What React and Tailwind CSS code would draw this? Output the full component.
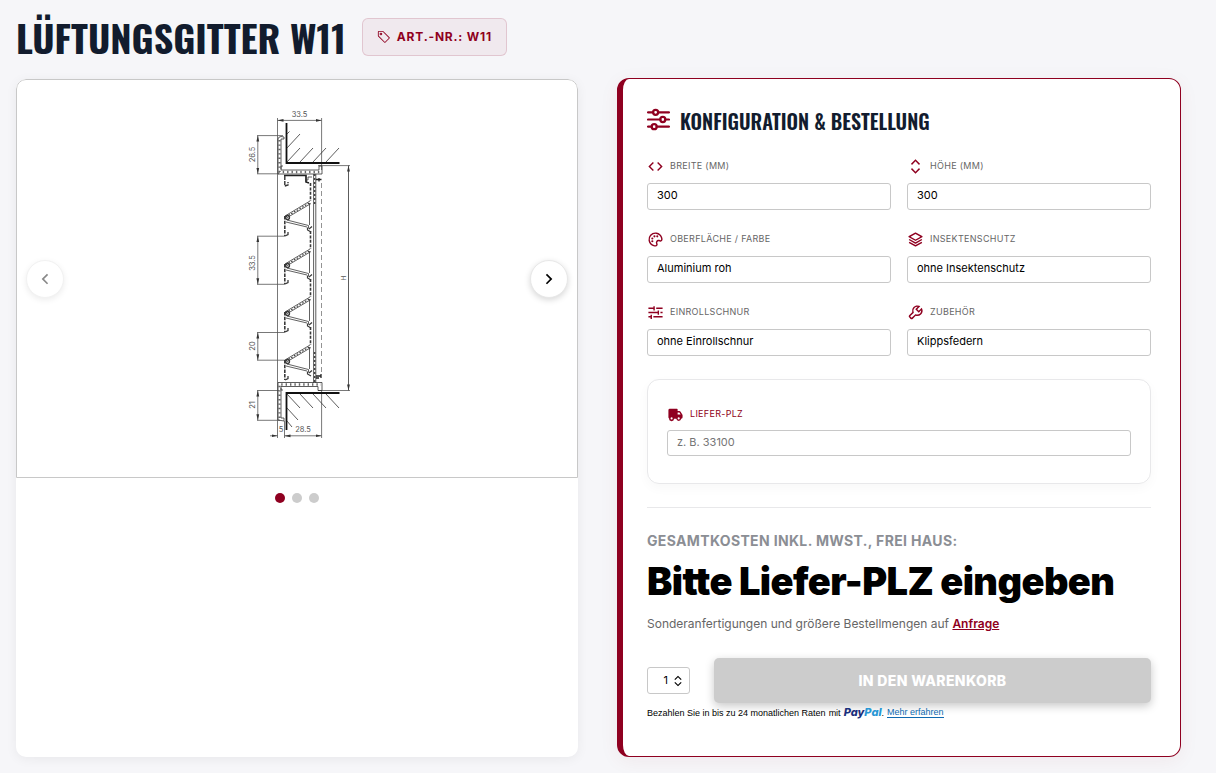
import {
  BiExpandHorizontal,
  BiExpandVertical,
  BiLayer,
  BiPalette,
  BiSlider,
  BiSolidTruck,
  BiWrench,
} from "react-icons/bi";
import { BsTag } from "react-icons/bs";
import { RiArrowLeftSLine, RiArrowRightSLine, RiExpandUpDownLine } from "react-icons/ri";

function SlidersIcon({ className }) {
  return (
    <svg viewBox="0 0 512 512" className={className} fill="none" stroke="currentColor" strokeWidth="50" strokeLinecap="round" aria-hidden="true">
      <path d="M24 96H136M248 96H488M24 256H296M408 256H488M24 416H104M216 416H488" />
      <circle cx="192" cy="96" r="56" />
      <circle cx="352" cy="256" r="56" />
      <circle cx="160" cy="416" r="56" />
    </svg>
  );
}

function ArrowedLine({ x1, y1, x2, y2 }) {
  return <line x1={x1} y1={y1} x2={x2} y2={y2} markerStart="url(#tip)" markerEnd="url(#tip)" />;
}

function Louvre({ y }) {
  return (
    <g>
      <path d={`M285 ${y}L310 ${y - 15}M286.5 ${y + 2}L311 ${y - 12.5}`} />
      <path d={`M285.7 ${y + 1}L310.5 ${y - 13.7}`} strokeDasharray="1.6 1.6" strokeWidth="1.2" />
      <path d={`M287 ${y + 4}L308.5 ${y + 9.5}V${y + 12.5}M286 ${y + 6}L307 ${y + 11}M309.5 ${y - 13}V${y + 9}`} />
      <path d={`M284.8 ${y}V${y + 20}`} strokeDasharray="3.5 1.2" strokeWidth="1.6" />
      <path d={`M285 ${y + 20}L288 ${y + 18.5}V${y + 16}`} strokeWidth="1.3" />
      <circle cx="287.5" cy={y + 1.5} r="2" strokeWidth="1.3" />
      <path d={`M307.5 ${y + 11.5}V${y + 14}L311 ${y + 16}M309 ${y + 13}L312 ${y + 10.5}`} strokeWidth="1.2" />
      <path d={`M310.5 ${y - 33}V${y - 15}`} strokeDasharray="3 1.4" strokeWidth="1.6" />
    </g>
  );
}

function ProfileDrawing() {
  return (
    <svg viewBox="241 111 112 336" className="h-[336px] w-[112px]" fill="none" stroke="#555" strokeWidth="0.8" role="img" aria-label="Profilschnitt W11">
      <defs>
        <marker id="tip" viewBox="0 0 6 4" refX="6" refY="2" markerWidth="6" markerHeight="4" orient="auto-start-reverse" markerUnits="userSpaceOnUse">
          <path d="M0 .6L6 2L0 3.4z" fill="#333" stroke="none" />
        </marker>
      </defs>
      <path d="M277.5 118V438M321.6 118V170M348.5 165.5V390.5" stroke="#555" />
      <ArrowedLine x1="277.5" y1="120.4" x2="321.6" y2="120.4" />
      <ArrowedLine x1="348.5" y1="165.6" x2="348.5" y2="390.4" />
      <ArrowedLine x1="257.8" y1="135.6" x2="257.8" y2="173.8" />
      <ArrowedLine x1="257.8" y1="236.2" x2="257.8" y2="284.3" />
      <ArrowedLine x1="257.8" y1="332.5" x2="257.8" y2="360.2" />
      <ArrowedLine x1="257.8" y1="390.5" x2="257.8" y2="420.3" />
      <ArrowedLine x1="284.5" y1="435.8" x2="321.6" y2="435.8" />
      <path d="M270 435.8H277.5" markerEnd="url(#tip)" />
      <path d="M257 135.6H283M257 173.8H279M257 236.2H285M257 284.3H285M257 332.5H285M257 360.2H285M257 390.5H279M257 420.3H280M318 165.6H350M318 390.5H350M284.5 421V438M321.6 390V438" />
      <path d="M286.5 123V163H339.5M286.5 430V393H339.5" stroke="#111" strokeWidth="1.8" />
      <path d="M287 134L289.5 131.5M287 148L300 134M287 162L300 148M300 162L313 148M313 162L326 148M326 162L339 148" stroke="#333" />
      <path d="M287 394L300 408M300 394L313 408M313 394L326 408M326 394L339 408M287 408L298 420M287 421L292 427" stroke="#333" />

      <path d="M278 174V139Q278 137 281 136.5L284 137V139H281V170H319V166H322V174ZM281 169V166H283" stroke="#333" />
      <path d="M279.5 140V172H320" stroke="#666" strokeWidth="2.4" strokeDasharray="1.4 3" />
      <path d="M278 420V382.5H322V390.5H318V386.5H281V418H284V421ZM281 388V390H283" stroke="#333" />
      <path d="M279.5 418V384.5H321" stroke="#666" strokeWidth="2.4" strokeDasharray="1.4 3" />

      <path d="M284 175.5H306V182L309 183" stroke="#222" strokeWidth="1.7" />
      <path d="M284.8 176V186L288 185V182" stroke="#333" strokeWidth="1.4" strokeDasharray="4 1" />
      <path d="M305 180H308V177H312" stroke="#333" />
      <path d="M313.6 174V383M315.8 174V383" stroke="#333" />
      <path d="M314.7 174V204M314.7 352V383" stroke="#444" strokeWidth="1.6" strokeDasharray="2 2" />
      <path d="M316 179.5H321.5M319 178V181.5M316 376H321.5M316 378H319M321 374V378" stroke="#222" strokeWidth="1.3" />
      <path d="M321.5 183V374" stroke="#777" strokeDasharray="5 3" />
      <g stroke="#3a3a3a">
        <Louvre y={216} />
        <Louvre y={264} />
        <Louvre y={312} />
        <Louvre y={360} />
      </g>
      <g fill="#555" stroke="none" fontSize="7.5" textAnchor="middle" fontFamily="Inter, sans-serif">
        <text x="299.5" y="116.5">33.5</text>
        <text x="303" y="431.5">28.5</text>
        <text x="281" y="431.5">5</text>
        <text transform="translate(254.5 154.5) rotate(-90)">26.5</text>
        <text transform="translate(254.5 263) rotate(-90)">33.5</text>
        <text transform="translate(254.5 346) rotate(-90)">20</text>
        <text transform="translate(254.5 405) rotate(-90)">21</text>
        <text transform="translate(345.5 278) rotate(-90)" fontSize="6">H</text>
      </g>
    </svg>
  );
}

const control =
  "block w-full appearance-none rounded-[3px] border border-[#c8c8c8] bg-white px-[9px] pb-[3px] text-[11px] text-black outline-none placeholder:text-[#757575]";

function Field({ id, label, icon: Icon, children }) {
  return (
    <div className="flex flex-col gap-[9px]">
      <label htmlFor={id} className="flex h-4 items-center gap-[6px] text-[9px] tracking-[0.3px] text-[#666] uppercase">
        <Icon className="size-[17px] text-[#8f0020]" />
        {label}
      </label>
      {children}
    </div>
  );
}

function SelectField({ id, label, icon, option }) {
  return (
    <Field id={id} label={label} icon={icon}>
      <select id={id} className={`${control} h-[27px]`}>
        <option>{option}</option>
      </select>
    </Field>
  );
}

export default function App() {
  return (
    <main className="min-h-screen bg-[#f6f6f9] pt-3 pr-[35px] pb-4 pl-4 font-['Inter',sans-serif]">
      <header className="flex items-center gap-4 pb-4">
        <h1 className="font-['Oswald',sans-serif] text-[38px] leading-[50px] font-bold text-[#121c2e]">LÜFTUNGSGITTER W11</h1>
        <p className="flex h-[38px] items-center gap-[6px] rounded-md border border-[#8f0020]/15 bg-[#8f0020]/5 px-[14px] text-[12px] font-bold tracking-[0.8px] text-[#8f0020]">
          <BsTag className="size-[14px]" />
          ART.-NR.: W11
        </p>
      </header>

      <div className="grid grid-cols-[562fr_564fr] gap-[39px]">
        <section aria-label="Produktbilder" className="mt-px overflow-hidden rounded-[10px] bg-white shadow-[0_2px_12px_rgba(0,0,0,0.06)]">
          <div className="flex h-[399px] items-center justify-between rounded-t-[10px] border border-[#c8c8c8] px-[9px]">
            <button type="button" aria-label="Vorheriges Bild" className="flex size-[38px] items-center justify-center rounded-full border border-[#f2f2f2] bg-white text-[#888] shadow-[0_2px_6px_rgba(0,0,0,0.08)]">
              <RiArrowLeftSLine className="size-5" />
            </button>
            <ProfileDrawing />
            <button type="button" aria-label="Nächstes Bild" className="flex size-[38px] items-center justify-center rounded-full border border-[#e8e8e8] bg-white text-black shadow-[0_2px_6px_rgba(0,0,0,0.16)]">
              <RiArrowRightSLine className="size-5" />
            </button>
          </div>
          <div className="flex justify-center gap-[7px] pt-[15px]">
            <button type="button" aria-label="Bild 1" className="size-[10px] rounded-full bg-[#8f0020]" />
            <button type="button" aria-label="Bild 2" className="size-[10px] rounded-full bg-[#ccc]" />
            <button type="button" aria-label="Bild 3" className="size-[10px] rounded-full bg-[#ccc]" />
          </div>
        </section>

        <section className="rounded-[12px] border border-l-[6px] border-[#8f0020] bg-white pt-[28px] pr-[29px] pb-[37px] pl-6 shadow-[0_4px_20px_rgba(143,0,32,0.06)]">
          <h2 className="flex items-center gap-[10px] font-['Oswald',sans-serif] text-[20px] leading-[28px] font-semibold text-[#121c2e]">
            <SlidersIcon className="mb-1 size-[23px] text-[#8f0020]" />
            KONFIGURATION &amp; BESTELLUNG
          </h2>

          <form onSubmit={(event) => event.preventDefault()}>
            <div className="mt-[23px] grid grid-cols-2 gap-x-4 gap-y-[21px]">
              <Field id="width" label="Breite (mm)" icon={BiExpandHorizontal}>
                <input id="width" type="text" inputMode="numeric" defaultValue="300" className={`${control} h-[27px]`} />
              </Field>
              <Field id="height" label="Höhe (mm)" icon={BiExpandVertical}>
                <input id="height" type="text" inputMode="numeric" defaultValue="300" className={`${control} h-[27px]`} />
              </Field>
              <SelectField id="surface" label="Oberfläche / Farbe" icon={BiPalette} option="Aluminium roh" />
              <SelectField id="insect" label="Insektenschutz" icon={BiLayer} option="ohne Insektenschutz" />
              <SelectField id="cord" label="Einrollschnur" icon={BiSlider} option="ohne Einrollschnur" />
              <SelectField id="extras" label="Zubehör" icon={BiWrench} option="Klippsfedern" />
            </div>

            <div className="mt-[23px] flex flex-col gap-2 rounded-[12px] border border-[#e8e8ea] px-[19px] pt-[26px] pb-[27px] shadow-[0_4px_12px_rgba(0,0,0,0.03)]">
              <label htmlFor="plz" className="flex h-4 items-center gap-[6px] text-[9px] tracking-[0.3px] text-[#8f0020] uppercase">
                <BiSolidTruck className="size-[17px]" />
                Liefer-PLZ
              </label>
              <input id="plz" type="text" placeholder="z. B. 33100" className={`${control} h-[26px]`} />
            </div>

            <div className="mt-[23px] border-t border-[#e8e8ea] pt-6">
              <p className="text-[14px] leading-[18px] font-bold tracking-wide text-[#8b8e94]">GESAMTKOSTEN INKL. MWST., FREI HAUS:</p>
              <p className="mt-2 text-[38px] leading-[46px] font-black tracking-[-0.6px] text-black">Bitte Liefer-PLZ eingeben</p>
              <p className="mt-[11px] text-[12px] leading-[18px] text-[#666]">
                Sonderanfertigungen und größere Bestellmengen auf{" "}
                <a href="#anfrage" className="font-semibold text-[#8f0020] underline">
                  Anfrage
                </a>
              </p>
            </div>

            <div className="mt-[25px] flex items-center gap-6">
              <div className="flex h-[27px] w-[43px] items-center justify-end gap-[3px] rounded-[3px] border border-[#c8c8c8] pr-[4px]">
                <input aria-label="Menge" type="text" inputMode="numeric" defaultValue="1" className="w-5 bg-transparent text-right text-[11px] outline-none" />
                <RiExpandUpDownLine className="size-[14px]" />
              </div>
              <button type="submit" disabled className="h-[45px] flex-1 rounded-[5px] bg-[#ccc] text-[14px] font-extrabold tracking-wide text-white shadow-[0_3px_10px_rgba(0,0,0,0.22)]">
                IN DEN WARENKORB
              </button>
            </div>

            <p className="mt-[3px] flex items-center gap-[3px] font-['Liberation_Sans',sans-serif] text-[9px] leading-[12px] text-black">
              <span>Bezahlen Sie in bis zu 24 monatlichen Raten</span>
              <span>mit</span>
              <span>
                <strong className="font-['Inter',sans-serif] text-[11px] font-extrabold italic">
                  <span className="text-[#1b2f7c]">Pay</span>
                  <span className="text-[#2897d5]">Pal</span>
                </strong>
                .
              </span>
              <a href="#paypal" className="border-b border-[#0f6ab0] leading-[10px] text-[#0f6ab0]">
                Mehr erfahren
              </a>
            </p>
          </form>
        </section>
      </div>
    </main>
  );
}
